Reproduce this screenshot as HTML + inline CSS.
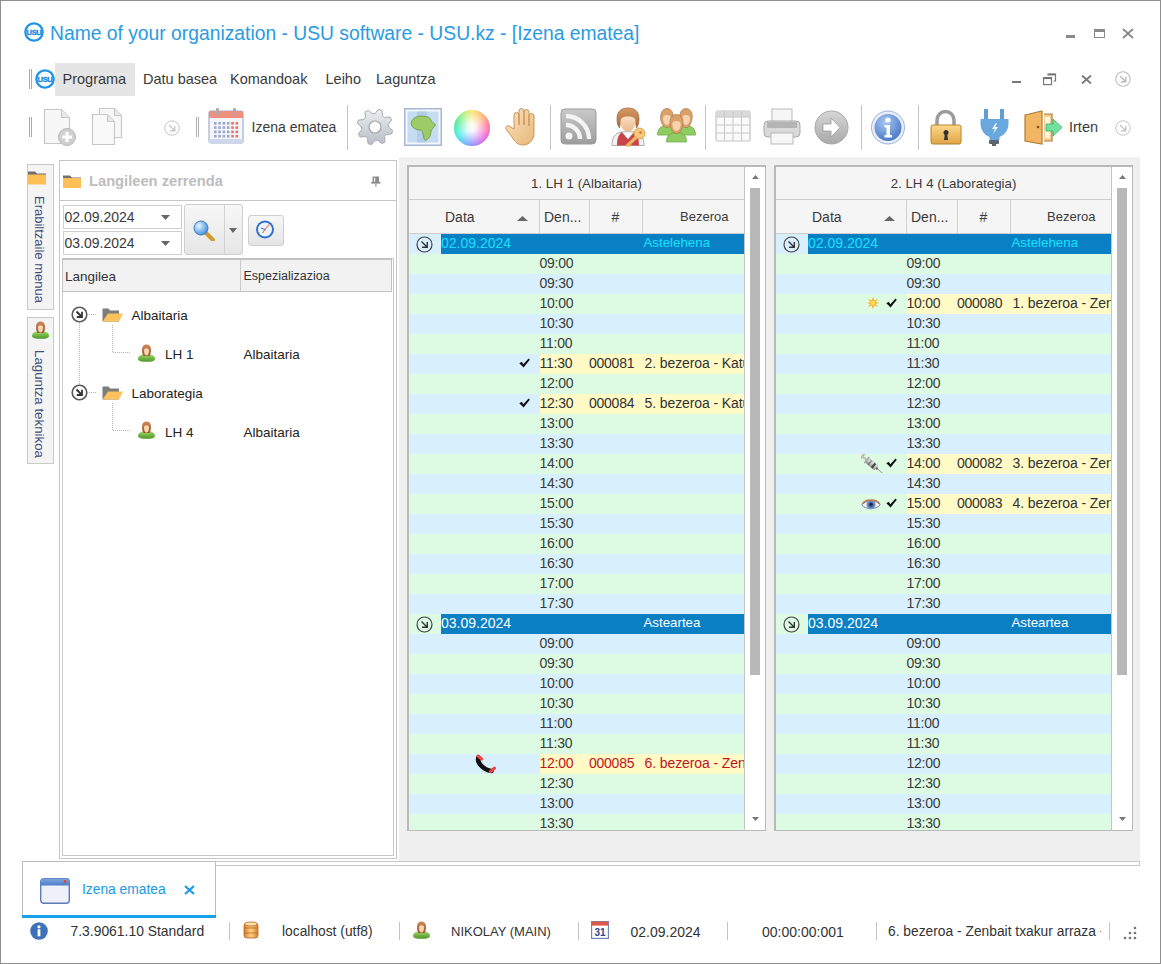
<!DOCTYPE html><html><head><meta charset="utf-8"><title>USU</title><style>
*{margin:0;padding:0;box-sizing:border-box}
html,body{width:1161px;height:964px;overflow:hidden;background:#fff}
body{font-family:"Liberation Sans",sans-serif;color:#333;position:relative}
.a{position:absolute;white-space:nowrap}
.t{position:absolute;white-space:nowrap;line-height:1}
</style></head><body>
<div class="a" style="left:0;top:0;width:1161px;height:964px;border:1px solid #8f8f8f"></div>
<svg class="a" style="left:24px;top:22px" width="20" height="20" viewBox="0 0 20 20"><circle cx="10" cy="10" r="8.7" fill="#fff" stroke="#1f95e8" stroke-width="2.3"/><text x="10" y="12.9" text-anchor="middle" font-family="Liberation Sans" font-weight="bold" font-size="7.6" fill="#1a86dc" stroke="#1a86dc" stroke-width="0.35" letter-spacing="-0.4">USU</text></svg>
<div class="t" style="left:50px;top:24px;font-size:19.3px;color:#2a9be3">Name of your organization - USU software - USU.kz - [Izena ematea]</div>
<div class="a" style="left:1066px;top:35px;width:9px;height:3px;background:#8a8a8a"></div>
<div class="a" style="left:1094px;top:29px;width:11px;height:9px;border:1.5px solid #8a8a8a;border-top-width:3px"></div>
<svg class="a" style="left:1122px;top:28px" width="12" height="11" viewBox="0 0 12 11"><path d="M1 1L11 10M11 1L1 10" stroke="#8a8a8a" stroke-width="1.8"/></svg>
<div class="a" style="left:29px;top:69px;width:1px;height:20px;background:#aaa"></div>
<div class="a" style="left:31px;top:69px;width:1px;height:20px;background:#aaa"></div>
<svg class="a" style="left:35px;top:69px" width="20" height="20" viewBox="0 0 20 20"><circle cx="10" cy="10" r="8.7" fill="#fff" stroke="#1f95e8" stroke-width="2.3"/><text x="10" y="12.9" text-anchor="middle" font-family="Liberation Sans" font-weight="bold" font-size="7.6" fill="#1a86dc" stroke="#1a86dc" stroke-width="0.35" letter-spacing="-0.4">USU</text></svg>
<div class="a" style="left:55px;top:63px;width:80px;height:33px;background:#e5e5e5"></div>
<div class="t" style="left:62.5px;top:72px;font-size:14.5px;color:#3a3a3a">Programa</div>
<div class="t" style="left:143px;top:72px;font-size:14.5px;color:#3a3a3a">Datu basea</div>
<div class="t" style="left:230px;top:72px;font-size:14.5px;color:#3a3a3a">Komandoak</div>
<div class="t" style="left:325.5px;top:72px;font-size:14.5px;color:#3a3a3a">Leiho</div>
<div class="t" style="left:376px;top:72px;font-size:14.5px;color:#3a3a3a">Laguntza</div>
<div class="a" style="left:1012px;top:81px;width:9px;height:2px;background:#777"></div>
<svg class="a" style="left:1043px;top:73px" width="14" height="13" viewBox="0 0 14 13"><path d="M4.5 1h8v7h-2" fill="none" stroke="#777" stroke-width="1.2"/><path d="M4.5 1.6h8" stroke="#777" stroke-width="1.8"/><rect x="0.5" y="4.6" width="8" height="7" fill="none" stroke="#777" stroke-width="1.2"/><path d="M0.5 5.2h8" stroke="#777" stroke-width="1.8"/></svg>
<svg class="a" style="left:1081px;top:75px" width="11" height="9" viewBox="0 0 11 9"><path d="M1 0.5L10 8.5M10 0.5L1 8.5" stroke="#777" stroke-width="1.8"/></svg>
<svg class="a" style="left:1115px;top:71px" width="16" height="16" viewBox="0 0 16 16"><circle cx="8" cy="8" r="7.2" fill="none" stroke="#bbb" stroke-width="1.1"/><path d="M5 5L10.5 10.5M6 10.8h4.8V6" fill="none" stroke="#bbb" stroke-width="1.4300000000000002"/></svg>
<div class="a" style="left:29px;top:117px;width:1px;height:20px;background:#aaa"></div>
<div class="a" style="left:31px;top:117px;width:1px;height:20px;background:#aaa"></div>
<svg class="a" style="left:43px;top:108px" width="34" height="38" viewBox="0 0 34 38"><path d="M1.5 1.5h17l8 8v26h-25z" fill="#f7f7f7" stroke="#c8c8c8" stroke-width="1.2"/><path d="M18.5 1.5v8h8" fill="#e8e8e8" stroke="#c8c8c8" stroke-width="1.2"/><circle cx="24" cy="29" r="8.5" fill="#d0d0d0" stroke="#b8b8b8"/><path d="M24 24v10M19 29h10" stroke="#fff" stroke-width="3"/></svg>
<svg class="a" style="left:91px;top:107px" width="36" height="39" viewBox="0 0 36 39"><path d="M8.5 1.5h15l7 7v22h-22z" fill="#f7f7f7" stroke="#c8c8c8" stroke-width="1.2"/><path d="M23.5 1.5v7h7" fill="#e8e8e8" stroke="#c8c8c8" stroke-width="1.2"/><path d="M1.5 7.5h15l7 7v23h-22z" fill="#f9f9f9" stroke="#c8c8c8" stroke-width="1.2"/><path d="M16.5 7.5v7h7" fill="#e8e8e8" stroke="#c8c8c8" stroke-width="1.2"/></svg>
<svg class="a" style="left:164px;top:120px" width="16" height="16" viewBox="0 0 16 16"><circle cx="8" cy="8" r="7.2" fill="none" stroke="#c4c4c4" stroke-width="1.0"/><path d="M5 5L10.5 10.5M6 10.8h4.8V6" fill="none" stroke="#c4c4c4" stroke-width="1.3"/></svg>
<div class="a" style="left:196px;top:117px;width:1px;height:20px;background:#b0b0b0"></div><div class="a" style="left:198px;top:117px;width:1px;height:20px;background:#b0b0b0"></div>
<svg class="a" style="left:208px;top:108px" width="36" height="37" viewBox="0 0 36 37"><rect x="1" y="3" width="34" height="32" rx="2" fill="#f4f6fb" stroke="#9fb0cc" stroke-width="1.2"/><path d="M1 10V5a2 2 0 0 1 2-2h30a2 2 0 0 1 2 2v5z" fill="#ee8f7f"/><rect x="1" y="31" width="34" height="4" fill="#cdd6ea"/><rect x="8" y="0" width="3" height="7" rx="1" fill="#aaa"/><rect x="25" y="0" width="3" height="7" rx="1" fill="#aaa"/><rect x="6.0" y="14.0" width="2.6" height="2.6" fill="#9aa7c8"/><rect x="10.3" y="14.0" width="2.6" height="2.6" fill="#9aa7c8"/><rect x="14.6" y="14.0" width="2.6" height="2.6" fill="#9aa7c8"/><rect x="18.9" y="14.0" width="2.6" height="2.6" fill="#9aa7c8"/><rect x="23.2" y="14.0" width="2.6" height="2.6" fill="#e9735f"/><rect x="27.5" y="14.0" width="2.6" height="2.6" fill="#e9735f"/><rect x="6.0" y="18.3" width="2.6" height="2.6" fill="#9aa7c8"/><rect x="10.3" y="18.3" width="2.6" height="2.6" fill="#9aa7c8"/><rect x="14.6" y="18.3" width="2.6" height="2.6" fill="#9aa7c8"/><rect x="18.9" y="18.3" width="2.6" height="2.6" fill="#9aa7c8"/><rect x="23.2" y="18.3" width="2.6" height="2.6" fill="#e9735f"/><rect x="27.5" y="18.3" width="2.6" height="2.6" fill="#e9735f"/><rect x="6.0" y="22.6" width="2.6" height="2.6" fill="#9aa7c8"/><rect x="10.3" y="22.6" width="2.6" height="2.6" fill="#9aa7c8"/><rect x="14.6" y="22.6" width="2.6" height="2.6" fill="#9aa7c8"/><rect x="18.9" y="22.6" width="2.6" height="2.6" fill="#9aa7c8"/><rect x="23.2" y="22.6" width="2.6" height="2.6" fill="#e9735f"/><rect x="27.5" y="22.6" width="2.6" height="2.6" fill="#e9735f"/><rect x="6.0" y="26.9" width="2.6" height="2.6" fill="#9aa7c8"/><rect x="10.3" y="26.9" width="2.6" height="2.6" fill="#9aa7c8"/><rect x="14.6" y="26.9" width="2.6" height="2.6" fill="#9aa7c8"/><rect x="18.9" y="26.9" width="2.6" height="2.6" fill="#9aa7c8"/><rect x="23.2" y="26.9" width="2.6" height="2.6" fill="#e9735f"/><rect x="27.5" y="26.9" width="2.6" height="2.6" fill="#e9735f"/></svg>
<div class="t" style="left:251.5px;top:120px;font-size:14px;color:#3a3a3a">Izena ematea</div>
<div class="a" style="left:347px;top:105px;width:1px;height:45px;background:#c4c4c4"></div>
<svg class="a" style="left:356px;top:108px" width="38" height="38" viewBox="0 0 38 38"><defs><linearGradient id="gg" x1="0" y1="0" x2="0" y2="1"><stop offset="0" stop-color="#eceef2"/><stop offset="1" stop-color="#b9bec6"/></linearGradient></defs><polygon points="19.00,5.50 22.51,1.35 25.89,2.37 26.50,7.78 28.55,9.45 33.97,9.00 35.63,12.11 32.24,16.37 32.50,19.00 36.65,22.51 35.63,25.89 30.22,26.50 28.55,28.55 29.00,33.97 25.89,35.63 21.63,32.24 19.00,32.50 15.49,36.65 12.11,35.63 11.50,30.22 9.45,28.55 4.03,29.00 2.37,25.89 5.76,21.63 5.50,19.00 1.35,15.49 2.37,12.11 7.78,11.50 9.45,9.45 9.00,4.03 12.11,2.37 16.37,5.76" fill="url(#gg)" stroke="#a6abb3" stroke-width="1" stroke-linejoin="round"/><circle cx="19" cy="19" r="6" fill="#fff" stroke="#a0a5ad" stroke-width="1.2"/></svg>
<svg class="a" style="left:404px;top:108px" width="38" height="38" viewBox="0 0 38 38"><rect x="0.75" y="0.75" width="36.5" height="36.5" fill="#f4f7fb" stroke="#a7b7d6" stroke-width="1.5"/><rect x="3.5" y="3.5" width="31" height="31" fill="#c5dcf2"/><rect x="13" y="3.5" width="10" height="31" fill="#b2cde8"/><path d="M10 10.5C12 8.5 15 8 18 8.2c2.5.2 4.5.3 6.3 1 1.5.7 2.2 2 2.8 3.3.8 1.5 2 2.5 3.8 3.4.8.4.5 1.3-.3 2.3-1.2 1.5-2.6 2.6-3.3 4.3-.6 1.6-.5 3.5-1.2 5.2-.8 2-2 3.6-3.8 4.3-1.3.5-2-.5-2.4-1.8-.6-2-.5-4.2-1.2-6.1-.5-1.4-1.6-2-3-2.2-1.8-.3-3.8-.3-5.3-1.5C7.800 19 7 16.5 7.300 14.3c.3-1.500 1.500-2.800 2.700-3.800z" fill="#9ccb68" stroke="#6c9c42" stroke-width="0.9"/></svg>
<div class="a" style="left:454px;top:110px;width:36px;height:36px;border-radius:50%;background:conic-gradient(from 0deg,#ffe36a,#ffb060 40deg,#ff6a8a 80deg,#f050d0 120deg,#b070f0 160deg,#60a8ff 200deg,#30e8e8 240deg,#40e890 290deg,#a8f070 330deg,#ffe36a)"></div>
<div class="a" style="left:454px;top:110px;width:36px;height:36px;border-radius:50%;background:radial-gradient(circle,#fff 0%,rgba(255,255,255,0.9) 15%,rgba(255,255,255,0.2) 62%,rgba(255,255,255,0) 75%)"></div>
<svg class="a" style="left:502px;top:107px" width="36" height="39" viewBox="0 0 36 39"><defs><linearGradient id="hg" x1="0" y1="0" x2="1" y2="1"><stop offset="0" stop-color="#fbe3bd"/><stop offset="1" stop-color="#e8b87a"/></linearGradient></defs><path d="M12 22V8a2.5 2.5 0 0 1 5 0v10V4a2.5 2.5 0 0 1 5 0v14V5a2.5 2.5 0 0 1 5 0v14V9a2.5 2.5 0 0 1 5 0v17c0 7-5 12-11 12-5 0-8-3-11-8l-6-8c-1-2 1-4 3-3z" fill="url(#hg)" stroke="#c9955a" stroke-width="1"/></svg>
<div class="a" style="left:550px;top:105px;width:1px;height:45px;background:#c4c4c4"></div>
<svg class="a" style="left:560px;top:108px" width="37" height="37" viewBox="0 0 37 37"><defs><linearGradient id="rg" x1="0" y1="0" x2="0" y2="1"><stop offset="0" stop-color="#c9c9c9"/><stop offset="1" stop-color="#9d9d9d"/></linearGradient></defs><rect x="1" y="1" width="35" height="35" rx="4" fill="url(#rg)" stroke="#9a9a9a"/><circle cx="9" cy="28" r="3.5" fill="#f4f4f4"/><path d="M6 17a14 14 0 0 1 14 14" fill="none" stroke="#f4f4f4" stroke-width="4.5"/><path d="M6 8a23 23 0 0 1 23 23" fill="none" stroke="#f4f4f4" stroke-width="4.5"/></svg>
<svg class="a" style="left:610px;top:107px" width="37" height="40" viewBox="0 0 37 40"><defs><linearGradient id="hair1" x1="0" y1="0" x2="0" y2="1"><stop offset="0" stop-color="#d79a62"/><stop offset="1" stop-color="#a8693a"/></linearGradient><linearGradient id="face1" x1="0" y1="0" x2="0" y2="1"><stop offset="0" stop-color="#fbe0c0"/><stop offset="1" stop-color="#e9b98c"/></linearGradient></defs><path d="M2 38.5c0-8 3-12 9-13.5h14c6 1.5 9 5.5 9 13.5z" fill="#f2f2f2" stroke="#9a9a9a" stroke-width="0.8"/><path d="M7 38.5c0-7 1.5-11 5-13.5l6 7 6-7c3.5 2.5 5 6.5 5 13.5z" fill="#c9444a"/><path d="M12 25l6 7 6-7z" fill="#fff" stroke="#aaa" stroke-width="0.6"/><path d="M7 12c0-8 4.5-11 11-11s11 3 11 11c0 4-1 7-2.5 9l-1-6c-1-3-3-4-7.5-4s-6.5 1-7.5 4l-1 6C8 19 7 16 7 12z" fill="url(#hair1)" stroke="#9a6236" stroke-width="0.7"/><path d="M10.5 14c0-3 2.5-4.5 7.5-4.5s7.5 1.5 7.5 4.5c0 6-3 10.5-7.5 10.5S10.5 20 10.5 14z" fill="url(#face1)"/><circle cx="29.5" cy="26.5" r="5.5" fill="#f7c877" stroke="#d39a45" stroke-width="0.9"/><circle cx="30.5" cy="25.5" r="1.3" fill="#b07a3a"/><path d="M26 30.5l-8.5 8" stroke="#f0b863" stroke-width="3.2" stroke-linecap="round"/><path d="M20 36.5l2 2" stroke="#d39a45" stroke-width="1.5"/></svg>
<svg class="a" style="left:657px;top:108px" width="39" height="37" viewBox="0 0 39 37"><path d="M0.5 27.1c0-6 3-9.5 9.5-9.5s9.5 3.5 9.5 9.5z" fill="#8fcc62" stroke="#6aa644" stroke-width="0.7"/><path d="M3.8 8.1c0-5 3-7.5 6.2-7.5s6.2 2.5 6.2 7.5c0 3-.5 6-2 8.5-1 2-2.5 3-4.3 3s-3.5-1-4.5-3c-1.5-2.5-2-5.5-2-8.5z" fill="#d9a06a" stroke="#a8703e" stroke-width="0.6"/><path d="M6.0 9.9c0-2 1.5-3 4.0-3s4.0 1 4.0 3c0 4-1.8 7-4.0 7s-4.0-3-4.0-7z" fill="#f6d2ad"/><path d="M19.5 27.1c0-6 3-9.5 9.5-9.5s9.5 3.5 9.5 9.5z" fill="#8fcc62" stroke="#6aa644" stroke-width="0.7"/><path d="M22.8 8.1c0-5 3-7.5 6.2-7.5s6.2 2.5 6.2 7.5c0 3-.5 6-2 8.5-1 2-2.5 3-4.3 3s-3.5-1-4.5-3c-1.5-2.5-2-5.5-2-8.5z" fill="#d9a06a" stroke="#a8703e" stroke-width="0.6"/><path d="M25.0 9.9c0-2 1.5-3 4.0-3s4.0 1 4.0 3c0 4-1.8 7-4.0 7s-4.0-3-4.0-7z" fill="#f6d2ad"/><path d="M9.5 34.0c0-6 3-9.5 10.0-9.5s10.0 3.5 10.0 9.5z" fill="#8fcc62" stroke="#6aa644" stroke-width="0.7"/><path d="M13.0 14.0c0-5 3-7.5 6.5-7.5s6.5 2.5 6.5 7.5c0 3-.5 6-2 8.5-1 2-2.5 3-4.5 3s-3.5-1-4.5-3c-1.5-2.5-2-5.5-2-8.5z" fill="#d9a06a" stroke="#a8703e" stroke-width="0.6"/><path d="M15.3 16.0c0-2 1.5-3 4.2-3s4.2 1 4.2 3c0 4-1.8 7-4.2 7s-4.2-3-4.2-7z" fill="#f6d2ad"/></svg>
<div class="a" style="left:705px;top:105px;width:1px;height:45px;background:#c4c4c4"></div>
<svg class="a" style="left:715px;top:110px" width="36" height="33" viewBox="0 0 36 33"><rect x="1" y="1" width="34" height="30" rx="1.5" fill="#fafafa" stroke="#c2c2c2" stroke-width="1.2"/><rect x="1" y="1" width="34" height="6" fill="#dadada"/><path d="M9.5 1v30" stroke="#c8c8c8"/><path d="M18 1v30" stroke="#c8c8c8"/><path d="M26.5 1v30" stroke="#c8c8c8"/><path d="M1 7h34" stroke="#c8c8c8"/><path d="M1 15h34" stroke="#c8c8c8"/><path d="M1 23h34" stroke="#c8c8c8"/></svg>
<svg class="a" style="left:763px;top:108px" width="38" height="37" viewBox="0 0 38 37"><rect x="9" y="1" width="20" height="14" fill="#f6f6f6" stroke="#b9b9b9"/><rect x="1" y="13" width="36" height="16" rx="4" fill="#d9d9d9" stroke="#a9a9a9"/><rect x="4" y="14" width="30" height="6" fill="#8f8f8f" opacity="0.5"/><rect x="8" y="25" width="22" height="11" fill="#f6f6f6" stroke="#b9b9b9"/></svg>
<svg class="a" style="left:814px;top:110px" width="35" height="35" viewBox="0 0 35 35"><defs><linearGradient id="ag" x1="0" y1="0" x2="0" y2="1"><stop offset="0" stop-color="#d6d6d6"/><stop offset="1" stop-color="#a9a9a9"/></linearGradient></defs><circle cx="17.5" cy="17.5" r="16.5" fill="url(#ag)" stroke="#a8a8a8"/><path d="M9 14h8V8l9 9.5-9 9.5v-6H9z" fill="#fff" stroke="#9a9a9a" stroke-width="0.8"/></svg>
<div class="a" style="left:861px;top:105px;width:1px;height:45px;background:#c4c4c4"></div>
<svg class="a" style="left:870px;top:110px" width="36" height="35" viewBox="0 0 36 35"><defs><radialGradient id="ig" cx="0.4" cy="0.3" r="0.8"><stop offset="0" stop-color="#a9c8f2"/><stop offset="1" stop-color="#3e6fc0"/></radialGradient></defs><circle cx="18" cy="17.5" r="16.5" fill="#e8eef8" stroke="#9fb2d6"/><circle cx="18" cy="17.5" r="13.5" fill="url(#ig)"/><circle cx="18" cy="10" r="2.6" fill="#fff"/><path d="M14.5 15h5.5v10h2v2.5h-7.5V25h2v-7.5h-2z" fill="#fff"/></svg>
<div class="a" style="left:918px;top:105px;width:1px;height:45px;background:#c4c4c4"></div>
<svg class="a" style="left:930px;top:109px" width="32" height="36" viewBox="0 0 32 36"><defs><linearGradient id="lg" x1="0" y1="0" x2="0" y2="1"><stop offset="0" stop-color="#fbd98b"/><stop offset="1" stop-color="#e0a546"/></linearGradient></defs><path d="M7 17V11a8.5 8.5 0 0 1 17 0v6" fill="none" stroke="#9b9b9b" stroke-width="3.5"/><rect x="1" y="16" width="30" height="19" rx="2" fill="url(#lg)" stroke="#b8822e"/><circle cx="16" cy="23.5" r="2.5" fill="#333"/><path d="M15 24h2l1 7h-4z" fill="#333"/></svg>
<svg class="a" style="left:980px;top:109px" width="30" height="37" viewBox="0 0 30 37"><path d="M6 1v10M22 1v10" stroke="#5b9fd6" stroke-width="4" stroke-linecap="round"/><path d="M0.5 10h28v5a14 14 0 0 1-9 13v3h-10v-3a14 14 0 0 1-9-13z" fill="#68a8dc"/><path d="M16 14l-4 6h3l-2 5 5-7h-3l2-4z" fill="#fff"/><rect x="9" y="31" width="10" height="4" rx="1" fill="#5d6670"/><rect x="12" y="35" width="4" height="2" fill="#5d6670"/></svg>
<svg class="a" style="left:1024px;top:110px" width="39" height="35" viewBox="0 0 39 35"><path d="M20 4h8v27h-8" fill="#f1cf95" stroke="#b07c32" stroke-width="1.2"/><path d="M21 7h5v21h-5z" fill="#fff5dc"/><path d="M1 5l17-4v33l-17-3z" fill="#f2b564" stroke="#b07c32" stroke-width="1.2"/><circle cx="14" cy="17" r="1.3" fill="#7a5223"/><path d="M22 14h7v-5l9 8.5-9 8.5v-5h-7z" fill="#6fe39d" stroke="#3da86a" stroke-width="0.8"/></svg>
<div class="t" style="left:1069px;top:119.5px;font-size:14.5px;color:#3a3a3a">Irten</div>
<svg class="a" style="left:1115px;top:120px" width="16" height="16" viewBox="0 0 16 16"><circle cx="8" cy="8" r="7.2" fill="none" stroke="#c4c4c4" stroke-width="1.0"/><path d="M5 5L10.5 10.5M6 10.8h4.8V6" fill="none" stroke="#c4c4c4" stroke-width="1.3"/></svg>
<div class="a" style="left:27px;top:164px;width:27px;height:146px;background:#f4f4f4;border:1px solid #c9c9c9"></div>
<div class="a" style="left:27px;top:317px;width:27px;height:147px;background:#f4f4f4;border:1px solid #c9c9c9"></div>
<svg class="a" style="left:28px;top:170px" width="19" height="16" viewBox="0 0 19 16"><path d="M0 1.5h7l2 2h9v4H0z" fill="#6f6f6f"/><path d="M0 4.5h18v10H0z" fill="#ffbf57"/></svg>
<div class="t" style="left:46px;top:196px;font-size:13px;color:#3d4f7a;transform:rotate(90deg);transform-origin:0 0">Erabiltzaile menua</div>
<svg class="a" style="left:31px;top:321px" width="19" height="18" viewBox="0 0 19 18"><defs><linearGradient id="pgr" x1="0" y1="0" x2="0" y2="1"><stop offset="0" stop-color="#a6dc6e"/><stop offset="1" stop-color="#4a9626"/></linearGradient><linearGradient id="phr" x1="0" y1="0" x2="0" y2="1"><stop offset="0" stop-color="#d0895a"/><stop offset="1" stop-color="#9a5530"/></linearGradient></defs><path d="M1 15c0-3.5 3.5-5 8.5-5s8.5 1.5 8.5 5c0 2-3.5 2.8-8.5 2.8S1 17 1 15z" fill="url(#pgr)"/><path d="M5 6c0-4 2-5.5 4.5-5.5S14 2 14 6c0 2.5-.5 4.5-1.5 6h-6C5.5 10.5 5 8.5 5 6z" fill="url(#phr)"/><path d="M7 6.5c0-1.5 1-2.2 2.5-2.2s2.5.7 2.5 2.2c0 3-1 5-2.5 5S7 9.5 7 6.5z" fill="#f7d6b0"/></svg>
<div class="t" style="left:46px;top:350px;font-size:13.3px;color:#3d4f7a;transform:rotate(90deg);transform-origin:0 0">Laguntza teknikoa</div>
<div class="a" style="left:59px;top:160px;width:338px;height:699px;border:1px solid #c6c6c6;background:#fff"></div>
<div class="a" style="left:60px;top:200px;width:336px;height:1px;background:#c6c6c6"></div>
<svg class="a" style="left:63px;top:174px" width="19" height="15" viewBox="0 0 19 15"><path d="M0 1.5h7l2 2h9v4H0z" fill="#707070"/><path d="M0 4h18v10H0z" fill="#ffbf57"/></svg>
<div class="t" style="left:89px;top:173.5px;font-size:14.7px;font-weight:bold;color:#bdbdbd">Langileen zerrenda</div>
<svg class="a" style="left:371px;top:176px" width="10" height="11" viewBox="0 0 10 11"><path d="M1.5 0.5h6.5v6H1.5z" fill="#8c8c8c"/><path d="M3 1.8h1.2v4H3z" fill="#f2f2f2"/><path d="M0.2 6h9.3v1.6H0.2z" fill="#8c8c8c"/><path d="M4.3 7.5h1.2v3H4.3z" fill="#8c8c8c"/></svg>
<div class="a" style="left:63px;top:205px;width:119px;height:24px;border:1px solid #cfcfcf;background:#fff"></div>
<div class="t" style="left:64.5px;top:209.5px;font-size:14px;color:#3a3a3a">02.09.2024</div>
<svg class="a" style="left:161px;top:215px" width="9" height="5" viewBox="0 0 9 5"><path d="M0 0h9L4.5 5z" fill="#666"/></svg>
<div class="a" style="left:63px;top:231px;width:119px;height:24px;border:1px solid #cfcfcf;background:#fff"></div>
<div class="t" style="left:64.5px;top:235.5px;font-size:14px;color:#3a3a3a">03.09.2024</div>
<svg class="a" style="left:161px;top:241px" width="9" height="5" viewBox="0 0 9 5"><path d="M0 0h9L4.5 5z" fill="#666"/></svg>
<div class="a" style="left:184px;top:204px;width:59px;height:51px;border:1px solid #cfcfcf;border-radius:3px;background:linear-gradient(#f7f7f7,#e6e6e6)"></div>
<div class="a" style="left:224px;top:205px;width:1px;height:49px;background:#d2d2d2"></div>
<svg class="a" style="left:193px;top:220px" width="22" height="21" viewBox="0 0 22 21"><defs><radialGradient id="mg" cx="0.35" cy="0.35" r="0.7"><stop offset="0" stop-color="#eaf6ff"/><stop offset="1" stop-color="#3d8fdc"/></radialGradient></defs><path d="M12 12l8 8" stroke="#d19a2a" stroke-width="4" stroke-linecap="round"/><circle cx="8" cy="8" r="7" fill="url(#mg)" stroke="#3b7fc4" stroke-width="1"/></svg>
<svg class="a" style="left:229px;top:228px" width="8" height="5" viewBox="0 0 8 5"><path d="M0 0h8L4 5z" fill="#666"/></svg>
<div class="a" style="left:248px;top:215px;width:36px;height:31px;border:1px solid #cfcfcf;border-radius:3px;background:linear-gradient(#f7f7f7,#e4e4e4)"></div>
<svg class="a" style="left:255px;top:219px" width="20" height="21" viewBox="0 0 20 21"><circle cx="10" cy="10.5" r="9" fill="#2f6fd0"/><circle cx="10" cy="10.5" r="7" fill="#f2f7ff"/><path d="M10 10.5L14 5.5M10 10.5L7.5 14" stroke="#e8704a" stroke-width="1.2"/><path d="M10 10.5L6 9" stroke="#2f6fd0" stroke-width="1"/></svg>
<div class="a" style="left:62px;top:258px;width:332px;height:598px;border:1px solid #c9c9c9;background:#fff"></div>
<div class="a" style="left:62px;top:258px;width:330px;height:34px;border:1px solid #c2c2c2;border-width:2px 1px 1px 1px;background:#f2f2f2"></div>
<div class="a" style="left:240px;top:259px;width:1px;height:33px;background:#cacaca"></div>
<div class="t" style="left:65px;top:270px;font-size:13.5px;color:#333">Langilea</div>
<div class="t" style="left:243.5px;top:270px;font-size:12.5px;color:#333">Espezializazioa</div>
<div class="a" style="left:79px;top:323px;width:1px;height:61px;background-image:linear-gradient(#b4b4b4 50%,transparent 50%);background-size:1px 2px"></div>
<svg class="a" style="left:71px;top:306px" width="17" height="17" viewBox="0 0 17 17"><circle cx="8.5" cy="8.5" r="7.3" fill="#fff" stroke="#5a5a5a" stroke-width="1.6"/><path d="M5.5 5.5l5 5" stroke="#333" stroke-width="2"/><path d="M5.8 11h5.2V5.8" fill="none" stroke="#333" stroke-width="1.8"/></svg>
<div class="a" style="left:89px;top:314px;width:8px;height:1px;background-image:linear-gradient(90deg,#b4b4b4 50%,transparent 50%);background-size:2px 1px"></div>
<svg class="a" style="left:102px;top:308px" width="21" height="14" viewBox="0 0 21 14"><path d="M0.5 0.5h6l1.5 2h9v11h-16.5z" fill="#7d7d7d"/><path d="M6 5.5h15l-4 8H0.5z" fill="#ffc25c"/></svg>
<div class="t" style="left:131.5px;top:309px;font-size:13.5px;color:#222">Albaitaria</div>
<div class="a" style="left:112px;top:325px;width:1px;height:27px;background-image:linear-gradient(#b4b4b4 50%,transparent 50%);background-size:1px 2px"></div>
<div class="a" style="left:113px;top:352px;width:18px;height:1px;background-image:linear-gradient(90deg,#b4b4b4 50%,transparent 50%);background-size:2px 1px"></div>
<svg class="a" style="left:137px;top:344px" width="19" height="18" viewBox="0 0 19 18"><defs><linearGradient id="pgr" x1="0" y1="0" x2="0" y2="1"><stop offset="0" stop-color="#a6dc6e"/><stop offset="1" stop-color="#4a9626"/></linearGradient><linearGradient id="phr" x1="0" y1="0" x2="0" y2="1"><stop offset="0" stop-color="#d0895a"/><stop offset="1" stop-color="#9a5530"/></linearGradient></defs><path d="M1 15c0-3.5 3.5-5 8.5-5s8.5 1.5 8.5 5c0 2-3.5 2.8-8.5 2.8S1 17 1 15z" fill="url(#pgr)"/><path d="M5 6c0-4 2-5.5 4.5-5.5S14 2 14 6c0 2.5-.5 4.5-1.5 6h-6C5.5 10.5 5 8.5 5 6z" fill="url(#phr)"/><path d="M7 6.5c0-1.5 1-2.2 2.5-2.2s2.5.7 2.5 2.2c0 3-1 5-2.5 5S7 9.5 7 6.5z" fill="#f7d6b0"/></svg>
<div class="t" style="left:165px;top:348px;font-size:13.5px;color:#222">LH 1</div>
<div class="t" style="left:243.5px;top:348px;font-size:13.5px;color:#222">Albaitaria</div>
<svg class="a" style="left:71px;top:384px" width="17" height="17" viewBox="0 0 17 17"><circle cx="8.5" cy="8.5" r="7.3" fill="#fff" stroke="#5a5a5a" stroke-width="1.6"/><path d="M5.5 5.5l5 5" stroke="#333" stroke-width="2"/><path d="M5.8 11h5.2V5.8" fill="none" stroke="#333" stroke-width="1.8"/></svg>
<div class="a" style="left:89px;top:392px;width:8px;height:1px;background-image:linear-gradient(90deg,#b4b4b4 50%,transparent 50%);background-size:2px 1px"></div>
<svg class="a" style="left:102px;top:386px" width="21" height="14" viewBox="0 0 21 14"><path d="M0.5 0.5h6l1.5 2h9v11h-16.5z" fill="#7d7d7d"/><path d="M6 5.5h15l-4 8H0.5z" fill="#ffc25c"/></svg>
<div class="t" style="left:131.5px;top:387px;font-size:13.5px;color:#222">Laborategia</div>
<div class="a" style="left:112px;top:403px;width:1px;height:27px;background-image:linear-gradient(#b4b4b4 50%,transparent 50%);background-size:1px 2px"></div>
<div class="a" style="left:113px;top:430px;width:18px;height:1px;background-image:linear-gradient(90deg,#b4b4b4 50%,transparent 50%);background-size:2px 1px"></div>
<svg class="a" style="left:137px;top:421px" width="19" height="18" viewBox="0 0 19 18"><defs><linearGradient id="pgr" x1="0" y1="0" x2="0" y2="1"><stop offset="0" stop-color="#a6dc6e"/><stop offset="1" stop-color="#4a9626"/></linearGradient><linearGradient id="phr" x1="0" y1="0" x2="0" y2="1"><stop offset="0" stop-color="#d0895a"/><stop offset="1" stop-color="#9a5530"/></linearGradient></defs><path d="M1 15c0-3.5 3.5-5 8.5-5s8.5 1.5 8.5 5c0 2-3.5 2.8-8.5 2.8S1 17 1 15z" fill="url(#pgr)"/><path d="M5 6c0-4 2-5.5 4.5-5.5S14 2 14 6c0 2.5-.5 4.5-1.5 6h-6C5.5 10.5 5 8.5 5 6z" fill="url(#phr)"/><path d="M7 6.5c0-1.5 1-2.2 2.5-2.2s2.5.7 2.5 2.2c0 3-1 5-2.5 5S7 9.5 7 6.5z" fill="#f7d6b0"/></svg>
<div class="t" style="left:165px;top:426px;font-size:13.5px;color:#222">LH 4</div>
<div class="t" style="left:243.5px;top:426px;font-size:13.5px;color:#222">Albaitaria</div>
<div class="a" style="left:399px;top:157px;width:741px;height:704px;background:#f0f0f0"></div>
<div class="a" style="left:407px;top:165px;width:359px;height:666px;background:#fff;border:1px solid #b9b9b9;border-width:2px 1px 1px 2px"></div>
<div class="a" style="left:409px;top:167px;width:335px;height:66px;background:#f5f5f5"></div>
<div class="a" style="left:409px;top:199px;width:335px;height:1px;background:#cdcdcd"></div>
<div class="a" style="left:409px;top:233px;width:335px;height:1px;background:#cdcdcd"></div>
<div class="t" style="left:407px;width:359px;text-align:center;top:176.5px;font-size:13.3px;color:#3a3a3a">1. LH 1 (Albaitaria)</div>
<div class="a" style="left:539px;top:200px;width:1px;height:33px;background:#d0d0d0"></div>
<div class="a" style="left:589px;top:200px;width:1px;height:33px;background:#d0d0d0"></div>
<div class="a" style="left:642px;top:200px;width:1px;height:33px;background:#d0d0d0"></div>
<div class="a" style="left:744px;top:167px;width:1px;height:664px;background:#c4c4c4"></div>
<div class="t" style="left:445px;top:210px;font-size:14px;color:#3a3a3a">Data</div>
<svg class="a" style="left:517px;top:216px" width="11" height="5" viewBox="0 0 11 5"><path d="M0 5h11L5.5 0z" fill="#666"/></svg>
<div class="t" style="left:544px;top:210px;font-size:14px;color:#3a3a3a">Den...</div>
<div class="t" style="left:589px;width:53px;text-align:center;top:210px;font-size:14px;color:#3a3a3a">#</div>
<div class="t" style="left:680px;top:210px;font-size:13px;color:#3a3a3a">Bezeroa</div>
<div class="a" style="left:409px;top:234px;width:335px;height:20px;background:#d8f0fd;overflow:hidden"></div>
<div class="a" style="left:441px;top:234px;width:303px;height:20px;background:#0a80c4"></div>
<svg class="a" style="left:416px;top:236px" width="17" height="17" viewBox="0 0 17 17"><circle cx="8.5" cy="8.5" r="7.5" fill="none" stroke="#444" stroke-width="1.2"/><path d="M5.5 5.5l5.5 5.5M6 11.3h5.3V6" fill="none" stroke="#333" stroke-width="1.4"/></svg>
<div class="t" style="left:441px;top:235.5px;font-size:14px;color:#18e0ff">02.09.2024</div>
<div class="t" style="left:643.5px;top:235.5px;font-size:13.3px;color:#18e0ff">Astelehena</div>
<div class="a" style="left:409px;top:254px;width:335px;height:20px;background:#ddfae2;overflow:hidden"></div>
<div class="t" style="left:539.5px;top:255.5px;font-size:14px;letter-spacing:-0.25px;color:#3a3a3a">09:00</div>
<div class="a" style="left:409px;top:274px;width:335px;height:20px;background:#d8f0fd;overflow:hidden"></div>
<div class="t" style="left:539.5px;top:275.5px;font-size:14px;letter-spacing:-0.25px;color:#3a3a3a">09:30</div>
<div class="a" style="left:409px;top:294px;width:335px;height:20px;background:#ddfae2;overflow:hidden"></div>
<div class="t" style="left:539.5px;top:295.5px;font-size:14px;letter-spacing:-0.25px;color:#3a3a3a">10:00</div>
<div class="a" style="left:409px;top:314px;width:335px;height:20px;background:#d8f0fd;overflow:hidden"></div>
<div class="t" style="left:539.5px;top:315.5px;font-size:14px;letter-spacing:-0.25px;color:#3a3a3a">10:30</div>
<div class="a" style="left:409px;top:334px;width:335px;height:20px;background:#ddfae2;overflow:hidden"></div>
<div class="t" style="left:539.5px;top:335.5px;font-size:14px;letter-spacing:-0.25px;color:#3a3a3a">11:00</div>
<div class="a" style="left:409px;top:354px;width:335px;height:20px;background:#d8f0fd;overflow:hidden"></div>
<div class="a" style="left:540px;top:354px;width:204px;height:20px;background:#fffac6"></div>
<div class="t" style="left:589px;top:355.5px;font-size:14px;letter-spacing:-0.25px;color:#333">000081</div>
<div class="a" style="left:643px;top:354px;width:101px;height:20px;overflow:hidden"><div class="t" style="left:1.5px;top:1.5px;font-size:14px;letter-spacing:-0.1px;color:#333">2. bezeroa - Katu</div></div>
<svg class="a" style="left:519px;top:358px" width="11" height="10" viewBox="0 0 11 10"><path d="M0.3 5.2L2.8 3.8 4.3 6.2 9.6 0.4 10.8 1.8 4.6 9.6z" fill="#111"/></svg>
<div class="t" style="left:539.5px;top:355.5px;font-size:14px;letter-spacing:-0.25px;color:#333">11:30</div>
<div class="a" style="left:409px;top:374px;width:335px;height:20px;background:#ddfae2;overflow:hidden"></div>
<div class="t" style="left:539.5px;top:375.5px;font-size:14px;letter-spacing:-0.25px;color:#3a3a3a">12:00</div>
<div class="a" style="left:409px;top:394px;width:335px;height:20px;background:#d8f0fd;overflow:hidden"></div>
<div class="a" style="left:540px;top:394px;width:204px;height:20px;background:#fffac6"></div>
<div class="t" style="left:589px;top:395.5px;font-size:14px;letter-spacing:-0.25px;color:#333">000084</div>
<div class="a" style="left:643px;top:394px;width:101px;height:20px;overflow:hidden"><div class="t" style="left:1.5px;top:1.5px;font-size:14px;letter-spacing:-0.1px;color:#333">5. bezeroa - Katu</div></div>
<svg class="a" style="left:519px;top:398px" width="11" height="10" viewBox="0 0 11 10"><path d="M0.3 5.2L2.8 3.8 4.3 6.2 9.6 0.4 10.8 1.8 4.6 9.6z" fill="#111"/></svg>
<div class="t" style="left:539.5px;top:395.5px;font-size:14px;letter-spacing:-0.25px;color:#333">12:30</div>
<div class="a" style="left:409px;top:414px;width:335px;height:20px;background:#ddfae2;overflow:hidden"></div>
<div class="t" style="left:539.5px;top:415.5px;font-size:14px;letter-spacing:-0.25px;color:#3a3a3a">13:00</div>
<div class="a" style="left:409px;top:434px;width:335px;height:20px;background:#d8f0fd;overflow:hidden"></div>
<div class="t" style="left:539.5px;top:435.5px;font-size:14px;letter-spacing:-0.25px;color:#3a3a3a">13:30</div>
<div class="a" style="left:409px;top:454px;width:335px;height:20px;background:#ddfae2;overflow:hidden"></div>
<div class="t" style="left:539.5px;top:455.5px;font-size:14px;letter-spacing:-0.25px;color:#3a3a3a">14:00</div>
<div class="a" style="left:409px;top:474px;width:335px;height:20px;background:#d8f0fd;overflow:hidden"></div>
<div class="t" style="left:539.5px;top:475.5px;font-size:14px;letter-spacing:-0.25px;color:#3a3a3a">14:30</div>
<div class="a" style="left:409px;top:494px;width:335px;height:20px;background:#ddfae2;overflow:hidden"></div>
<div class="t" style="left:539.5px;top:495.5px;font-size:14px;letter-spacing:-0.25px;color:#3a3a3a">15:00</div>
<div class="a" style="left:409px;top:514px;width:335px;height:20px;background:#d8f0fd;overflow:hidden"></div>
<div class="t" style="left:539.5px;top:515.5px;font-size:14px;letter-spacing:-0.25px;color:#3a3a3a">15:30</div>
<div class="a" style="left:409px;top:534px;width:335px;height:20px;background:#ddfae2;overflow:hidden"></div>
<div class="t" style="left:539.5px;top:535.5px;font-size:14px;letter-spacing:-0.25px;color:#3a3a3a">16:00</div>
<div class="a" style="left:409px;top:554px;width:335px;height:20px;background:#d8f0fd;overflow:hidden"></div>
<div class="t" style="left:539.5px;top:555.5px;font-size:14px;letter-spacing:-0.25px;color:#3a3a3a">16:30</div>
<div class="a" style="left:409px;top:574px;width:335px;height:20px;background:#ddfae2;overflow:hidden"></div>
<div class="t" style="left:539.5px;top:575.5px;font-size:14px;letter-spacing:-0.25px;color:#3a3a3a">17:00</div>
<div class="a" style="left:409px;top:594px;width:335px;height:20px;background:#d8f0fd;overflow:hidden"></div>
<div class="t" style="left:539.5px;top:595.5px;font-size:14px;letter-spacing:-0.25px;color:#3a3a3a">17:30</div>
<div class="a" style="left:409px;top:614px;width:335px;height:20px;background:#ddfae2;overflow:hidden"></div>
<div class="a" style="left:441px;top:614px;width:303px;height:20px;background:#0a80c4"></div>
<svg class="a" style="left:416px;top:616px" width="17" height="17" viewBox="0 0 17 17"><circle cx="8.5" cy="8.5" r="7.5" fill="none" stroke="#444" stroke-width="1.2"/><path d="M5.5 5.5l5.5 5.5M6 11.3h5.3V6" fill="none" stroke="#333" stroke-width="1.4"/></svg>
<div class="t" style="left:441px;top:615.5px;font-size:14px;color:#ffffff">03.09.2024</div>
<div class="t" style="left:643.5px;top:615.5px;font-size:13.3px;color:#ffffff">Asteartea</div>
<div class="a" style="left:409px;top:634px;width:335px;height:20px;background:#d8f0fd;overflow:hidden"></div>
<div class="t" style="left:539.5px;top:635.5px;font-size:14px;letter-spacing:-0.25px;color:#3a3a3a">09:00</div>
<div class="a" style="left:409px;top:654px;width:335px;height:20px;background:#ddfae2;overflow:hidden"></div>
<div class="t" style="left:539.5px;top:655.5px;font-size:14px;letter-spacing:-0.25px;color:#3a3a3a">09:30</div>
<div class="a" style="left:409px;top:674px;width:335px;height:20px;background:#d8f0fd;overflow:hidden"></div>
<div class="t" style="left:539.5px;top:675.5px;font-size:14px;letter-spacing:-0.25px;color:#3a3a3a">10:00</div>
<div class="a" style="left:409px;top:694px;width:335px;height:20px;background:#ddfae2;overflow:hidden"></div>
<div class="t" style="left:539.5px;top:695.5px;font-size:14px;letter-spacing:-0.25px;color:#3a3a3a">10:30</div>
<div class="a" style="left:409px;top:714px;width:335px;height:20px;background:#d8f0fd;overflow:hidden"></div>
<div class="t" style="left:539.5px;top:715.5px;font-size:14px;letter-spacing:-0.25px;color:#3a3a3a">11:00</div>
<div class="a" style="left:409px;top:734px;width:335px;height:20px;background:#ddfae2;overflow:hidden"></div>
<div class="t" style="left:539.5px;top:735.5px;font-size:14px;letter-spacing:-0.25px;color:#3a3a3a">11:30</div>
<div class="a" style="left:409px;top:754px;width:335px;height:20px;background:#d8f0fd;overflow:hidden"></div>
<div class="a" style="left:540px;top:754px;width:204px;height:20px;background:#fffac6"></div>
<div class="t" style="left:589px;top:755.5px;font-size:14px;letter-spacing:-0.25px;color:#c0141e">000085</div>
<div class="a" style="left:643px;top:754px;width:101px;height:20px;overflow:hidden"><div class="t" style="left:1.5px;top:1.5px;font-size:14px;letter-spacing:-0.1px;color:#c0141e">6. bezeroa - Zenbait txakur arraza</div></div>
<svg class="a" style="left:475px;top:754px" width="21" height="20" viewBox="0 0 21 20"><path d="M3.5 3.5C1.5 8 8 16 16.5 17" fill="none" stroke="#111" stroke-width="4.6" stroke-linecap="round"/><path d="M3 2l3.6 3M15.5 17.5l4-3.3" stroke="#f0443a" stroke-width="3" stroke-linecap="round"/></svg>
<div class="t" style="left:539.5px;top:755.5px;font-size:14px;letter-spacing:-0.25px;color:#c0141e">12:00</div>
<div class="a" style="left:409px;top:774px;width:335px;height:20px;background:#ddfae2;overflow:hidden"></div>
<div class="t" style="left:539.5px;top:775.5px;font-size:14px;letter-spacing:-0.25px;color:#3a3a3a">12:30</div>
<div class="a" style="left:409px;top:794px;width:335px;height:20px;background:#d8f0fd;overflow:hidden"></div>
<div class="t" style="left:539.5px;top:795.5px;font-size:14px;letter-spacing:-0.25px;color:#3a3a3a">13:00</div>
<div class="a" style="left:409px;top:814px;width:335px;height:16px;background:#ddfae2;overflow:hidden"></div>
<div class="t" style="left:539.5px;top:815.5px;font-size:14px;letter-spacing:-0.25px;color:#3a3a3a">13:30</div>
<div class="a" style="left:745px;top:167px;width:20px;height:663px;background:#fff"></div>
<svg class="a" style="left:752px;top:175px" width="7" height="4" viewBox="0 0 7 4"><path d="M0 4h7L3.5 0z" fill="#777"/></svg>
<div class="a" style="left:750px;top:188px;width:10px;height:487px;background:#b8b8b8"></div>
<svg class="a" style="left:752px;top:817px" width="7" height="4" viewBox="0 0 7 4"><path d="M0 0h7L3.5 4z" fill="#777"/></svg>
<div class="a" style="left:774px;top:165px;width:359px;height:666px;background:#fff;border:1px solid #b9b9b9;border-width:2px 1px 1px 2px"></div>
<div class="a" style="left:776px;top:167px;width:335px;height:66px;background:#f5f5f5"></div>
<div class="a" style="left:776px;top:199px;width:335px;height:1px;background:#cdcdcd"></div>
<div class="a" style="left:776px;top:233px;width:335px;height:1px;background:#cdcdcd"></div>
<div class="t" style="left:774px;width:359px;text-align:center;top:176.5px;font-size:13.3px;color:#3a3a3a">2. LH 4 (Laborategia)</div>
<div class="a" style="left:906px;top:200px;width:1px;height:33px;background:#d0d0d0"></div>
<div class="a" style="left:957px;top:200px;width:1px;height:33px;background:#d0d0d0"></div>
<div class="a" style="left:1010px;top:200px;width:1px;height:33px;background:#d0d0d0"></div>
<div class="a" style="left:1111px;top:167px;width:1px;height:664px;background:#c4c4c4"></div>
<div class="t" style="left:812px;top:210px;font-size:14px;color:#3a3a3a">Data</div>
<svg class="a" style="left:884px;top:216px" width="11" height="5" viewBox="0 0 11 5"><path d="M0 5h11L5.5 0z" fill="#666"/></svg>
<div class="t" style="left:911px;top:210px;font-size:14px;color:#3a3a3a">Den...</div>
<div class="t" style="left:957px;width:53px;text-align:center;top:210px;font-size:14px;color:#3a3a3a">#</div>
<div class="t" style="left:1047px;top:210px;font-size:13px;color:#3a3a3a">Bezeroa</div>
<div class="a" style="left:776px;top:234px;width:335px;height:20px;background:#d8f0fd;overflow:hidden"></div>
<div class="a" style="left:808px;top:234px;width:303px;height:20px;background:#0a80c4"></div>
<svg class="a" style="left:783px;top:236px" width="17" height="17" viewBox="0 0 17 17"><circle cx="8.5" cy="8.5" r="7.5" fill="none" stroke="#444" stroke-width="1.2"/><path d="M5.5 5.5l5.5 5.5M6 11.3h5.3V6" fill="none" stroke="#333" stroke-width="1.4"/></svg>
<div class="t" style="left:808px;top:235.5px;font-size:14px;color:#18e0ff">02.09.2024</div>
<div class="t" style="left:1011.5px;top:235.5px;font-size:13.3px;color:#18e0ff">Astelehena</div>
<div class="a" style="left:776px;top:254px;width:335px;height:20px;background:#ddfae2;overflow:hidden"></div>
<div class="t" style="left:906.5px;top:255.5px;font-size:14px;letter-spacing:-0.25px;color:#3a3a3a">09:00</div>
<div class="a" style="left:776px;top:274px;width:335px;height:20px;background:#d8f0fd;overflow:hidden"></div>
<div class="t" style="left:906.5px;top:275.5px;font-size:14px;letter-spacing:-0.25px;color:#3a3a3a">09:30</div>
<div class="a" style="left:776px;top:294px;width:335px;height:20px;background:#ddfae2;overflow:hidden"></div>
<div class="a" style="left:907px;top:294px;width:204px;height:20px;background:#fffac6"></div>
<div class="t" style="left:957px;top:295.5px;font-size:14px;letter-spacing:-0.25px;color:#333">000080</div>
<div class="a" style="left:1011px;top:294px;width:100px;height:20px;overflow:hidden"><div class="t" style="left:1.5px;top:1.5px;font-size:14px;letter-spacing:-0.1px;color:#333">1. bezeroa - Zenbait txakur arraza</div></div>
<svg class="a" style="left:886px;top:298px" width="11" height="10" viewBox="0 0 11 10"><path d="M0.3 5.2L2.8 3.8 4.3 6.2 9.6 0.4 10.8 1.8 4.6 9.6z" fill="#111"/></svg>
<svg class="a" style="left:867px;top:297px" width="12" height="12" viewBox="0 0 12 12"><path d="M6 0l1.3 3.5L11 2 8.5 5 12 6 8.5 7l2.5 3-3.7-1.5L6 12 4.7 8.5 1 10l2.5-3L0 6l3.5-1L1 2l3.7 1.5z" fill="#ffb020"/><circle cx="6" cy="6" r="2.3" fill="#ffe060"/></svg>
<div class="t" style="left:906.5px;top:295.5px;font-size:14px;letter-spacing:-0.25px;color:#333">10:00</div>
<div class="a" style="left:776px;top:314px;width:335px;height:20px;background:#d8f0fd;overflow:hidden"></div>
<div class="t" style="left:906.5px;top:315.5px;font-size:14px;letter-spacing:-0.25px;color:#3a3a3a">10:30</div>
<div class="a" style="left:776px;top:334px;width:335px;height:20px;background:#ddfae2;overflow:hidden"></div>
<div class="t" style="left:906.5px;top:335.5px;font-size:14px;letter-spacing:-0.25px;color:#3a3a3a">11:00</div>
<div class="a" style="left:776px;top:354px;width:335px;height:20px;background:#d8f0fd;overflow:hidden"></div>
<div class="t" style="left:906.5px;top:355.5px;font-size:14px;letter-spacing:-0.25px;color:#3a3a3a">11:30</div>
<div class="a" style="left:776px;top:374px;width:335px;height:20px;background:#ddfae2;overflow:hidden"></div>
<div class="t" style="left:906.5px;top:375.5px;font-size:14px;letter-spacing:-0.25px;color:#3a3a3a">12:00</div>
<div class="a" style="left:776px;top:394px;width:335px;height:20px;background:#d8f0fd;overflow:hidden"></div>
<div class="t" style="left:906.5px;top:395.5px;font-size:14px;letter-spacing:-0.25px;color:#3a3a3a">12:30</div>
<div class="a" style="left:776px;top:414px;width:335px;height:20px;background:#ddfae2;overflow:hidden"></div>
<div class="t" style="left:906.5px;top:415.5px;font-size:14px;letter-spacing:-0.25px;color:#3a3a3a">13:00</div>
<div class="a" style="left:776px;top:434px;width:335px;height:20px;background:#d8f0fd;overflow:hidden"></div>
<div class="t" style="left:906.5px;top:435.5px;font-size:14px;letter-spacing:-0.25px;color:#3a3a3a">13:30</div>
<div class="a" style="left:776px;top:454px;width:335px;height:20px;background:#ddfae2;overflow:hidden"></div>
<div class="a" style="left:907px;top:454px;width:204px;height:20px;background:#fffac6"></div>
<div class="t" style="left:957px;top:455.5px;font-size:14px;letter-spacing:-0.25px;color:#333">000082</div>
<div class="a" style="left:1011px;top:454px;width:100px;height:20px;overflow:hidden"><div class="t" style="left:1.5px;top:1.5px;font-size:14px;letter-spacing:-0.1px;color:#333">3. bezeroa - Zenbait txakur arraza</div></div>
<svg class="a" style="left:886px;top:458px" width="11" height="10" viewBox="0 0 11 10"><path d="M0.3 5.2L2.8 3.8 4.3 6.2 9.6 0.4 10.8 1.8 4.6 9.6z" fill="#111"/></svg>
<svg class="a" style="left:861px;top:454px" width="22" height="21" viewBox="0 0 22 21"><defs><linearGradient id="syg" x1="0" y1="0" x2="0" y2="1"><stop offset="0" stop-color="#f4f4f4"/><stop offset="0.5" stop-color="#c9c9c9"/><stop offset="1" stop-color="#8a8a8a"/></linearGradient></defs><g transform="translate(10.5 10) rotate(40)"><rect x="-13" y="-3.2" width="2.2" height="6.4" fill="#b8b8b8"/><rect x="-11" y="-1" width="4" height="2" fill="#bbb"/><rect x="-7" y="-3.8" width="1.6" height="7.6" fill="#a8a8a8"/><rect x="-5.5" y="-2.8" width="11.5" height="5.6" rx="0.8" fill="url(#syg)" stroke="#888" stroke-width="0.5"/><rect x="1.5" y="-2.8" width="2.2" height="5.6" fill="#444"/><rect x="-3" y="-2.8" width="1.6" height="5.6" fill="#555" opacity="0.6"/><rect x="6" y="-1.1" width="2" height="2.2" fill="#666"/><rect x="8" y="-0.45" width="6" height="0.9" fill="#999"/></g></svg>
<div class="t" style="left:906.5px;top:455.5px;font-size:14px;letter-spacing:-0.25px;color:#333">14:00</div>
<div class="a" style="left:776px;top:474px;width:335px;height:20px;background:#d8f0fd;overflow:hidden"></div>
<div class="t" style="left:906.5px;top:475.5px;font-size:14px;letter-spacing:-0.25px;color:#3a3a3a">14:30</div>
<div class="a" style="left:776px;top:494px;width:335px;height:20px;background:#ddfae2;overflow:hidden"></div>
<div class="a" style="left:907px;top:494px;width:204px;height:20px;background:#fffac6"></div>
<div class="t" style="left:957px;top:495.5px;font-size:14px;letter-spacing:-0.25px;color:#333">000083</div>
<div class="a" style="left:1011px;top:494px;width:100px;height:20px;overflow:hidden"><div class="t" style="left:1.5px;top:1.5px;font-size:14px;letter-spacing:-0.1px;color:#333">4. bezeroa - Zenbait txakur arraza</div></div>
<svg class="a" style="left:886px;top:498px" width="11" height="10" viewBox="0 0 11 10"><path d="M0.3 5.2L2.8 3.8 4.3 6.2 9.6 0.4 10.8 1.8 4.6 9.6z" fill="#111"/></svg>
<svg class="a" style="left:861px;top:497px" width="20" height="14" viewBox="0 0 20 14"><defs><radialGradient id="eyg" cx="0.5" cy="0.5" r="0.5"><stop offset="0" stop-color="#2a3f70"/><stop offset="0.35" stop-color="#3f5f9a"/><stop offset="1" stop-color="#8aa3d0"/></radialGradient></defs><path d="M0.8 7.8C4 3 16 3 19.2 7.8 16 12.8 4 12.8 0.8 7.8z" fill="#f2f3fa" stroke="#6f78b0" stroke-width="1"/><circle cx="10" cy="7.8" r="4.6" fill="url(#eyg)"/><circle cx="10" cy="7.3" r="1.5" fill="#1a2545"/><path d="M1.2 7C4.5 1.6 15.5 1.6 18.8 7" fill="none" stroke="#c0784a" stroke-width="1.4"/></svg>
<div class="t" style="left:906.5px;top:495.5px;font-size:14px;letter-spacing:-0.25px;color:#333">15:00</div>
<div class="a" style="left:776px;top:514px;width:335px;height:20px;background:#d8f0fd;overflow:hidden"></div>
<div class="t" style="left:906.5px;top:515.5px;font-size:14px;letter-spacing:-0.25px;color:#3a3a3a">15:30</div>
<div class="a" style="left:776px;top:534px;width:335px;height:20px;background:#ddfae2;overflow:hidden"></div>
<div class="t" style="left:906.5px;top:535.5px;font-size:14px;letter-spacing:-0.25px;color:#3a3a3a">16:00</div>
<div class="a" style="left:776px;top:554px;width:335px;height:20px;background:#d8f0fd;overflow:hidden"></div>
<div class="t" style="left:906.5px;top:555.5px;font-size:14px;letter-spacing:-0.25px;color:#3a3a3a">16:30</div>
<div class="a" style="left:776px;top:574px;width:335px;height:20px;background:#ddfae2;overflow:hidden"></div>
<div class="t" style="left:906.5px;top:575.5px;font-size:14px;letter-spacing:-0.25px;color:#3a3a3a">17:00</div>
<div class="a" style="left:776px;top:594px;width:335px;height:20px;background:#d8f0fd;overflow:hidden"></div>
<div class="t" style="left:906.5px;top:595.5px;font-size:14px;letter-spacing:-0.25px;color:#3a3a3a">17:30</div>
<div class="a" style="left:776px;top:614px;width:335px;height:20px;background:#ddfae2;overflow:hidden"></div>
<div class="a" style="left:808px;top:614px;width:303px;height:20px;background:#0a80c4"></div>
<svg class="a" style="left:783px;top:616px" width="17" height="17" viewBox="0 0 17 17"><circle cx="8.5" cy="8.5" r="7.5" fill="none" stroke="#444" stroke-width="1.2"/><path d="M5.5 5.5l5.5 5.5M6 11.3h5.3V6" fill="none" stroke="#333" stroke-width="1.4"/></svg>
<div class="t" style="left:808px;top:615.5px;font-size:14px;color:#ffffff">03.09.2024</div>
<div class="t" style="left:1011.5px;top:615.5px;font-size:13.3px;color:#ffffff">Asteartea</div>
<div class="a" style="left:776px;top:634px;width:335px;height:20px;background:#d8f0fd;overflow:hidden"></div>
<div class="t" style="left:906.5px;top:635.5px;font-size:14px;letter-spacing:-0.25px;color:#3a3a3a">09:00</div>
<div class="a" style="left:776px;top:654px;width:335px;height:20px;background:#ddfae2;overflow:hidden"></div>
<div class="t" style="left:906.5px;top:655.5px;font-size:14px;letter-spacing:-0.25px;color:#3a3a3a">09:30</div>
<div class="a" style="left:776px;top:674px;width:335px;height:20px;background:#d8f0fd;overflow:hidden"></div>
<div class="t" style="left:906.5px;top:675.5px;font-size:14px;letter-spacing:-0.25px;color:#3a3a3a">10:00</div>
<div class="a" style="left:776px;top:694px;width:335px;height:20px;background:#ddfae2;overflow:hidden"></div>
<div class="t" style="left:906.5px;top:695.5px;font-size:14px;letter-spacing:-0.25px;color:#3a3a3a">10:30</div>
<div class="a" style="left:776px;top:714px;width:335px;height:20px;background:#d8f0fd;overflow:hidden"></div>
<div class="t" style="left:906.5px;top:715.5px;font-size:14px;letter-spacing:-0.25px;color:#3a3a3a">11:00</div>
<div class="a" style="left:776px;top:734px;width:335px;height:20px;background:#ddfae2;overflow:hidden"></div>
<div class="t" style="left:906.5px;top:735.5px;font-size:14px;letter-spacing:-0.25px;color:#3a3a3a">11:30</div>
<div class="a" style="left:776px;top:754px;width:335px;height:20px;background:#d8f0fd;overflow:hidden"></div>
<div class="t" style="left:906.5px;top:755.5px;font-size:14px;letter-spacing:-0.25px;color:#3a3a3a">12:00</div>
<div class="a" style="left:776px;top:774px;width:335px;height:20px;background:#ddfae2;overflow:hidden"></div>
<div class="t" style="left:906.5px;top:775.5px;font-size:14px;letter-spacing:-0.25px;color:#3a3a3a">12:30</div>
<div class="a" style="left:776px;top:794px;width:335px;height:20px;background:#d8f0fd;overflow:hidden"></div>
<div class="t" style="left:906.5px;top:795.5px;font-size:14px;letter-spacing:-0.25px;color:#3a3a3a">13:00</div>
<div class="a" style="left:776px;top:814px;width:335px;height:16px;background:#ddfae2;overflow:hidden"></div>
<div class="t" style="left:906.5px;top:815.5px;font-size:14px;letter-spacing:-0.25px;color:#3a3a3a">13:30</div>
<div class="a" style="left:1112px;top:167px;width:20px;height:663px;background:#fff"></div>
<svg class="a" style="left:1119px;top:175px" width="7" height="4" viewBox="0 0 7 4"><path d="M0 4h7L3.5 0z" fill="#777"/></svg>
<div class="a" style="left:1117px;top:188px;width:10px;height:487px;background:#b8b8b8"></div>
<svg class="a" style="left:1119px;top:817px" width="7" height="4" viewBox="0 0 7 4"><path d="M0 0h7L3.5 4z" fill="#777"/></svg>
<div class="a" style="left:215px;top:861px;width:925px;height:1px;background:#c8c8c8"></div>
<div class="a" style="left:215px;top:865px;width:925px;height:1px;background:#c8c8c8"></div>
<div class="a" style="left:1139px;top:861px;width:1px;height:5px;background:#c8c8c8"></div>
<div class="a" style="left:22px;top:861px;width:194px;height:56px;background:#fff;border:1px solid #bdbdbd;border-bottom:none"></div>
<div class="a" style="left:22px;top:915px;width:194px;height:3px;background:#1aa0ec"></div>
<svg class="a" style="left:40px;top:878px" width="30" height="26" viewBox="0 0 30 26"><defs><linearGradient id="wg" x1="0" y1="0" x2="0" y2="1"><stop offset="0" stop-color="#7fa8e0"/><stop offset="1" stop-color="#4c7cc8"/></linearGradient></defs><rect x="0.7" y="0.7" width="28.6" height="24.6" rx="3" fill="#eef1f9" stroke="#5d7cbc" stroke-width="1.4"/><path d="M0.7 7.5V3.7a3 3 0 0 1 3-3h22.6a3 3 0 0 1 3 3v3.8z" fill="url(#wg)"/><circle cx="25" cy="3.5" r="1.4" fill="#e8402a"/></svg>
<div class="t" style="left:82px;top:883px;font-size:13.8px;color:#1a9ae6">Izena ematea</div>
<svg class="a" style="left:184px;top:885px" width="11" height="10" viewBox="0 0 11 10"><path d="M1 1l9 8M10 1l-9 8" stroke="#1a9ae6" stroke-width="2.2"/></svg>
<svg class="a" style="left:29px;top:922px" width="20" height="18" viewBox="0 0 20 18"><circle cx="10" cy="9" r="8.8" fill="#3d72b8"/><circle cx="10" cy="4.8" r="1.6" fill="#fff"/><rect x="8.6" y="7.3" width="2.8" height="7" fill="#fff"/></svg>
<div class="t" style="left:70.5px;top:924.5px;font-size:13.9px;color:#333">7.3.9061.10 Standard</div>
<div class="a" style="left:229px;top:922px;width:1px;height:18px;background:#c4c4c4"></div>
<svg class="a" style="left:243px;top:921px" width="16" height="19" viewBox="0 0 16 19"><defs><linearGradient id="dbg" x1="0" y1="0" x2="1" y2="0"><stop offset="0" stop-color="#d9822b"/><stop offset="0.5" stop-color="#ffd28a"/><stop offset="1" stop-color="#d9822b"/></linearGradient></defs><rect x="1" y="2" width="14" height="15" rx="3" fill="url(#dbg)" stroke="#b4661e" stroke-width="0.8"/><path d="M1.5 7h13M1.5 12h13" stroke="#b4661e" stroke-width="0.8"/><ellipse cx="8" cy="3" rx="6.5" ry="2" fill="#ffe2a8" stroke="#b4661e" stroke-width="0.8"/></svg>
<div class="t" style="left:282px;top:925px;font-size:13.8px;color:#333">localhost (utf8)</div>
<div class="a" style="left:399px;top:922px;width:1px;height:18px;background:#c4c4c4"></div>
<svg class="a" style="left:412px;top:921px" width="19" height="18" viewBox="0 0 19 18"><defs><linearGradient id="pgr" x1="0" y1="0" x2="0" y2="1"><stop offset="0" stop-color="#a6dc6e"/><stop offset="1" stop-color="#4a9626"/></linearGradient><linearGradient id="phr" x1="0" y1="0" x2="0" y2="1"><stop offset="0" stop-color="#d0895a"/><stop offset="1" stop-color="#9a5530"/></linearGradient></defs><path d="M1 15c0-3.5 3.5-5 8.5-5s8.5 1.5 8.5 5c0 2-3.5 2.8-8.5 2.8S1 17 1 15z" fill="url(#pgr)"/><path d="M5 6c0-4 2-5.5 4.5-5.5S14 2 14 6c0 2.5-.5 4.5-1.5 6h-6C5.5 10.5 5 8.5 5 6z" fill="url(#phr)"/><path d="M7 6.5c0-1.5 1-2.2 2.5-2.2s2.5.7 2.5 2.2c0 3-1 5-2.5 5S7 9.5 7 6.5z" fill="#f7d6b0"/></svg>
<div class="t" style="left:451px;top:925px;font-size:13px;color:#333">NIKOLAY (MAIN)</div>
<div class="a" style="left:578px;top:922px;width:1px;height:18px;background:#c4c4c4"></div>
<svg class="a" style="left:591px;top:921px" width="18" height="18" viewBox="0 0 18 18"><rect x="0.6" y="0.6" width="16.8" height="16.8" fill="#fff" stroke="#6f86b8" stroke-width="1.2"/><rect x="0.6" y="0.6" width="16.8" height="4" fill="#e05a4a"/><text x="9" y="15" text-anchor="middle" font-family="Liberation Sans" font-weight="bold" font-size="10" fill="#2c4a8a">31</text></svg>
<div class="t" style="left:630.5px;top:925px;font-size:14px;color:#333">02.09.2024</div>
<div class="a" style="left:727px;top:922px;width:1px;height:18px;background:#c4c4c4"></div>
<div class="t" style="left:762px;top:925px;font-size:14px;color:#333">00:00:00:001</div>
<div class="a" style="left:876px;top:922px;width:1px;height:18px;background:#c4c4c4"></div>
<div class="a" style="left:888px;top:918px;width:213px;height:24px;overflow:hidden"><div class="t" style="left:0;top:7px;font-size:13.8px;color:#333">6. bezeroa - Zenbait txakur arraza - Katua</div></div>
<div class="a" style="left:1109px;top:922px;width:1px;height:18px;background:#c4c4c4"></div>
<svg class="a" style="left:1122px;top:926px" width="17" height="15" viewBox="0 0 17 15"><path d="M13 0.3999999999999999l1.6 1.6-1.6 1.6-1.6-1.6z" fill="#666"/><path d="M8 5.4l1.6 1.6-1.6 1.6-1.6-1.6z" fill="#666"/><path d="M13 5.4l1.6 1.6-1.6 1.6-1.6-1.6z" fill="#666"/><path d="M3 10.4l1.6 1.6-1.6 1.6-1.6-1.6z" fill="#666"/><path d="M8 10.4l1.6 1.6-1.6 1.6-1.6-1.6z" fill="#666"/><path d="M13 10.4l1.6 1.6-1.6 1.6-1.6-1.6z" fill="#666"/></svg>
</body></html>
